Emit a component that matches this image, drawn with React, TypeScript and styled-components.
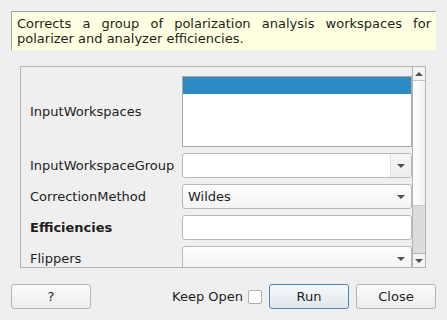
import React from "react";
import styled, { createGlobalStyle } from "styled-components";

const GlobalStyle = createGlobalStyle`
  html, body {
    margin: 0;
    padding: 0;
    background: #efefef;
    font-family: "DejaVu Sans", "Liberation Sans", sans-serif;
    font-size: 13px;
    color: #1e1e1e;
  }
`;

const Dialog = styled.div`
  width: 447px;
  height: 320px;
  box-sizing: border-box;
  padding: 11px 11px 0;
  display: flex;
  flex-direction: column;
`;

const Description = styled.div`
  height: 39px;
  box-sizing: border-box;
  background: #ffffe1;
  border-top: 1px solid #a0a0a0;
  border-left: 1px solid #a0a0a0;
  padding: 4px 5px 0 5px;
  line-height: 15px;
  text-align: justify;
`;

const Frame = styled.div`
  margin: 16px 10px 0 9px;
  height: 202px;
  box-sizing: border-box;
  border: 1px solid #b4b4b4;
  display: flex;
  overflow: hidden;
`;

const Form = styled.div`
  flex: 1;
  display: grid;
  grid-template-columns: 152px 230px;
  row-gap: 6px;
  align-items: center;
  padding: 9px 0 0 9px;
  align-content: start;
`;

const Label = styled.div<{ $bold?: boolean }>`
  font-weight: ${(p) => (p.$bold ? "bold" : "normal")};
  white-space: nowrap;
`;

const List = styled.div`
  height: 71px;
  box-sizing: border-box;
  border: 1px solid #a8a8a8;
  background: #fff;
`;

const SelectedRow = styled.div`
  height: 17px;
  background: #2e8bc6;
`;

const Combo = styled.div<{ $editable?: boolean }>`
  height: 25px;
  box-sizing: border-box;
  border: 1px solid #b8b8b8;
  border-radius: 3px;
  background: ${(p) =>
    p.$editable ? "#fff" : "linear-gradient(#fdfdfd, #f3f3f3)"};
  display: flex;
  align-items: center;
  padding-left: ${(p) => (p.$editable ? "0" : "5px")};
`;

const ComboText = styled.span`
  flex: 1;
`;

const DropButton = styled.div<{ $separated?: boolean }>`
  width: 20px;
  align-self: stretch;
  display: flex;
  align-items: center;
  justify-content: center;
  margin-left: auto;
  border-left: ${(p) => (p.$separated ? "1px solid #e2e2e2" : "none")};
  background: ${(p) =>
    p.$separated ? "linear-gradient(#f6f6f6, #ebebeb)" : "transparent"};
  border-radius: 0 2px 2px 0;
`;

const Arrow = styled.div<{ $up?: boolean }>`
  width: 0;
  height: 0;
  border-left: 4px solid transparent;
  border-right: 4px solid transparent;
  ${(p) =>
    p.$up ? "border-bottom: 4px solid #505050;" : "border-top: 4px solid #505050;"}
`;

const LineEdit = styled.div`
  height: 25px;
  box-sizing: border-box;
  border: 1px solid #b8b8b8;
  border-radius: 3px;
  background: #fff;
`;

const ScrollBar = styled.div`
  width: 14px;
  border-left: 1px solid #b4b4b4;
  display: flex;
  flex-direction: column;
`;

const ScrollArrow = styled.div<{ $top?: boolean }>`
  height: 13px;
  display: flex;
  align-items: center;
  justify-content: center;
  background: #f4f4f4;
  ${(p) =>
    p.$top ? "border-bottom: 1px solid #c4c4c4;" : "border-top: 1px solid #b4b4b4;"}
`;

const Track = styled.div`
  flex: 1;
  display: flex;
  flex-direction: column;
  background: linear-gradient(90deg, #ffffff, #f0f0f0);
`;

const Handle = styled.div`
  height: 47px;
  margin-top: auto;
  background: #dcdcdc;
  border-top: 1px solid #c8c8c8;
`;

const Buttons = styled.div`
  margin-top: 16px;
  display: flex;
  align-items: center;
`;

const Button = styled.button<{ $primary?: boolean }>`
  width: 80px;
  height: 25px;
  box-sizing: border-box;
  font-family: inherit;
  font-size: 13px;
  color: #1e1e1e;
  border-radius: 3px;
  border: 1px solid ${(p) => (p.$primary ? "#4a86b8" : "#b4b4b4")};
  background: ${(p) =>
    p.$primary
      ? "linear-gradient(#f6f8fa, #dfe6ee)"
      : "linear-gradient(#fbfbfb, #ededed)"};
  padding: 0;
`;

const KeepOpen = styled.label`
  margin-left: auto;
  display: flex;
  align-items: center;
  gap: 5px;
  margin-right: 7px;
`;

const CheckBox = styled.span`
  width: 14px;
  height: 14px;
  box-sizing: border-box;
  border: 1px solid #b0b0b0;
  border-radius: 2px;
  background: #fff;
`;

const App: React.FC = () => {
  return (
    <>
      <GlobalStyle />
      <Dialog>
        <Description>
          Corrects a group of polarization analysis workspaces for polarizer
          and analyzer efficiencies.
        </Description>
        <Frame>
          <Form>
            <Label>InputWorkspaces</Label>
            <List>
              <SelectedRow />
            </List>
            <Label>InputWorkspaceGroup</Label>
            <Combo $editable>
              <DropButton $separated>
                <Arrow />
              </DropButton>
            </Combo>
            <Label>CorrectionMethod</Label>
            <Combo>
              <ComboText>Wildes</ComboText>
              <DropButton>
                <Arrow />
              </DropButton>
            </Combo>
            <Label $bold>Efficiencies</Label>
            <LineEdit />
            <Label>Flippers</Label>
            <Combo>
              <ComboText />
              <DropButton>
                <Arrow />
              </DropButton>
            </Combo>
          </Form>
          <ScrollBar>
            <ScrollArrow $top>
              <Arrow $up />
            </ScrollArrow>
            <Track>
              <Handle />
            </Track>
            <ScrollArrow>
              <Arrow />
            </ScrollArrow>
          </ScrollBar>
        </Frame>
        <Buttons>
          <Button>?</Button>
          <KeepOpen>
            Keep Open
            <CheckBox />
          </KeepOpen>
          <Button $primary>Run</Button>
          <Button style={{ marginLeft: 7 }}>Close</Button>
        </Buttons>
      </Dialog>
    </>
  );
};

export default App;
